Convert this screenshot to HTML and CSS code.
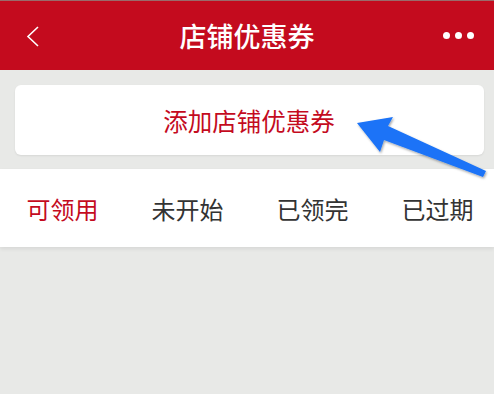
FILE: index.html
```html
<!DOCTYPE html>
<html lang="zh">
<head>
<meta charset="utf-8">
<link rel="stylesheet" href="styles.css">
</head>
<body>
<div class="page">
  <header class="nav">
    <svg class="back" width="20" height="30" viewBox="0 0 20 30"><polyline points="14,6 4,15.5 14,25" fill="none" stroke="#fff" stroke-width="1.6"/></svg>
    <h1 class="title">店铺优惠券</h1>
    <div class="more"><span></span><span></span><span></span></div>
  </header>
  <div class="card">添加店铺优惠券</div>
  <nav class="tabs">
    <div class="tab active">可领用</div>
    <div class="tab">未开始</div>
    <div class="tab">已领完</div>
    <div class="tab">已过期</div>
  </nav>
  <svg class="arrow" width="494" height="394" viewBox="0 0 494 394">
    <defs>
      <filter id="sh" x="-10%" y="-10%" width="130%" height="130%">
        <feDropShadow dx="1" dy="1.5" stdDeviation="1" flood-color="#000" flood-opacity="0.35"/>
      </filter>
    </defs>
    <polygon filter="url(#sh)" fill="#1a73f7" points="357,123 393,117 388,126 486,171 483,177 384,140 380,152"/>
  </svg>
</div>
</body>
</html>
```
FILE: styles.css
```css
html, body {
  margin: 0;
  padding: 0;
}
body {
  width: 494px;
  height: 394px;
  overflow: hidden;
  background: #e8e9e7;
  font-family: "Noto Sans CJK SC", "Noto Sans", sans-serif;
}
.page {
  position: relative;
  height: 394px;
}
.nav {
  height: 69px;
  background: #c40b1e;
  border-top: 1px solid #9a6b6b;
  display: flex;
  align-items: center;
  justify-content: space-between;
  padding: 0 20px 0 24px;
}
.back {
  display: block;
  margin-top: 1px;
}
.title {
  margin: 0;
  color: #fff;
  font-size: 27px;
  font-weight: 500;
  letter-spacing: 0;
  position: absolute;
  left: 0;
  right: 0;
  top: 18px;
  text-align: center;
  line-height: 36px;
  pointer-events: none;
}
.more {
  display: flex;
  gap: 5px;
  margin-top: 0;
}
.more span {
  width: 7px;
  height: 7px;
  border-radius: 50%;
  background: #fff;
}
.card {
  margin: 15px 10px 0 15px;
  height: 70px;
  background: #fff;
  border-radius: 6px;
  box-shadow: 0 1px 2px rgba(0,0,0,0.08);
  display: flex;
  align-items: center;
  justify-content: center;
  color: #c40b1e;
  font-size: 24.5px;
  padding-right: 1px;
}
.tabs {
  margin-top: 14px;
  height: 78px;
  background: #fff;
  display: grid;
  grid-template-columns: repeat(4, 125px);
  box-shadow: 0 2px 4px rgba(0,0,0,0.08);
}
.tab {
  display: flex;
  align-items: center;
  justify-content: center;
  font-size: 24px;
  color: #333;
  white-space: nowrap;
}
.tab.active {
  color: #c40b1e;
}
.arrow {
  position: absolute;
  left: 0;
  top: 0;
  pointer-events: none;
}
```
